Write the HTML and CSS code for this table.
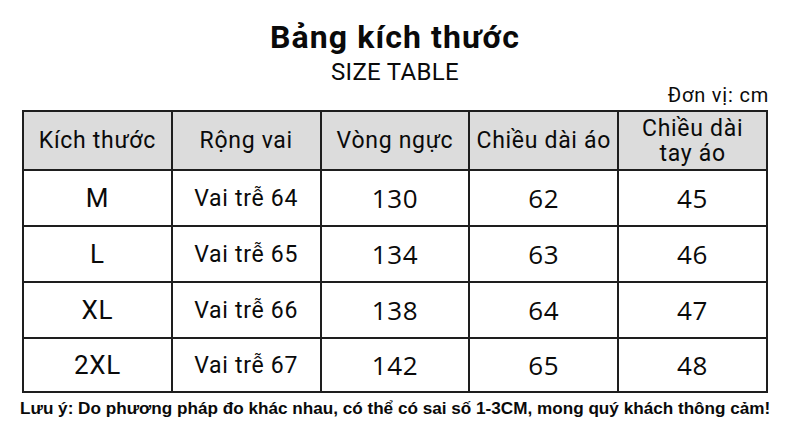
FILE: index.html
```html
<!DOCTYPE html>
<html lang="vi">
<head>
<meta charset="utf-8">
<link rel="stylesheet" href="styles.css">
</head>
<body>
<div class="page">
  <h1 class="title">Bảng kích thước</h1>
  <div class="subtitle">SIZE TABLE</div>
  <div class="unit">Đơn vị: cm</div>
  <table class="size-table">
    <thead>
      <tr>
        <th>Kích thước</th>
        <th>Rộng vai</th>
        <th>Vòng ngực</th>
        <th>Chiều dài áo</th>
        <th class="two-line">Chiều dài<br>tay áo</th>
      </tr>
    </thead>
    <tbody>
      <tr><td class="size">M</td><td class="shoulder">Vai trễ 64</td><td class="num">130</td><td class="num">62</td><td class="num">45</td></tr>
      <tr><td class="size">L</td><td class="shoulder">Vai trễ 65</td><td class="num">134</td><td class="num">63</td><td class="num">46</td></tr>
      <tr><td class="size">XL</td><td class="shoulder">Vai trễ 66</td><td class="num">138</td><td class="num">64</td><td class="num">47</td></tr>
      <tr class="last"><td class="size">2XL</td><td class="shoulder">Vai trễ 67</td><td class="num">142</td><td class="num">65</td><td class="num">48</td></tr>
    </tbody>
  </table>
  <p class="note">Lưu ý: Do phương pháp đo khác nhau, có thể có sai số 1-3CM, mong quý khách thông cảm!</p>
</div>
</body>
</html>
```
FILE: styles.css
```css
* { box-sizing: border-box; }
html, body { margin: 0; padding: 0; background: #fff; }
body { font-family: Roboto, "Noto Sans", sans-serif; color: #0a0a0a; }
.page {
  width: 790px;
  height: 431px;
  display: flex;
  flex-direction: column;
  align-items: stretch;
  padding: 17px 22px 0 22px;
}
.title {
  margin: 0;
  text-align: center;
  font-size: 32px;
  font-weight: 700;
  line-height: 40px;
  letter-spacing: 1.1px;
  color: #0a0a0a;
}
.subtitle {
  text-align: center;
  font-size: 24px;
  line-height: 24px;
  margin-top: 3px;
  letter-spacing: 0.3px;
}
.unit {
  text-align: right;
  font-size: 20px;
  line-height: 22px;
  letter-spacing: 0.8px;
  margin-right: -1px;
}
.size-table {
  border-collapse: collapse;
  width: 746px;
  table-layout: fixed;
  margin-top: 4px;
}
.size-table th, .size-table td {
  border: 2px solid #1e1e1e;
  text-align: center;
  padding: 0;
  letter-spacing: 0.7px;
}
.size-table th {
  background: #dcdcdc;
  font-weight: 400;
  font-size: 23px;
  line-height: 25px;
  height: 59px;
}
.size-table td { height: 56px; }
.size-table tr.last td { height: 54px; }
.size { font-size: 26px; }
.shoulder { font-size: 23px; }
.num { font-family: "Open Sans", "Noto Sans", sans-serif; font-size: 26px; }
.note {
  margin: 5px -4px 0 -2px;
  font-family: "Liberation Sans", Arial, sans-serif;
  font-weight: 700;
  font-size: 17.15px;
  line-height: 20px;
  white-space: nowrap;
}
```
